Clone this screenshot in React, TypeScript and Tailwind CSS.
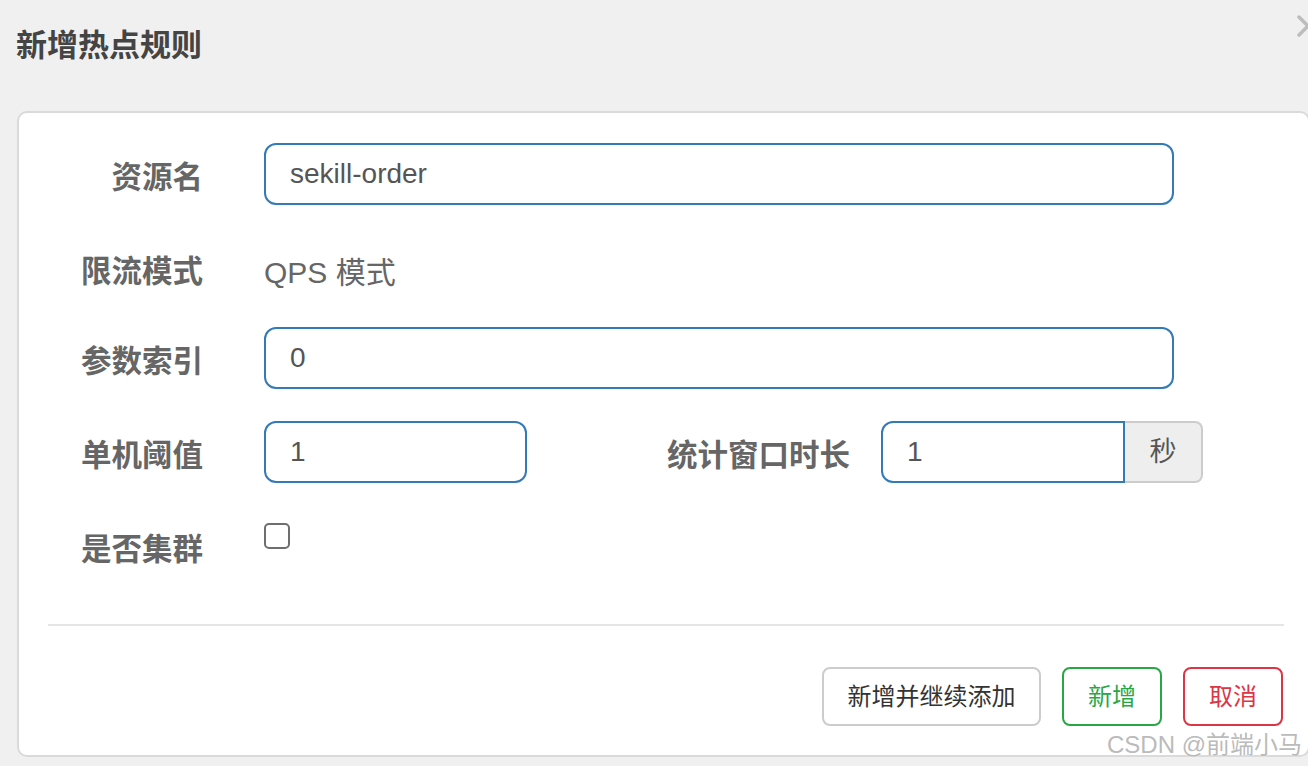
import React from 'react';

const font = { fontFamily: '"Liberation Sans", "Noto Sans CJK SC", sans-serif' };

const Label: React.FC<{ children: React.ReactNode; className?: string }> = ({ children, className = 'w-[155px]' }) => (
  <div className={`${className} h-[62px] flex items-center justify-end pt-2 text-[30.5px] font-bold text-[#666] shrink-0`}>
    {children}
  </div>
);

const TextInput: React.FC<{ value: string; className?: string }> = ({ value, className = 'w-[910px] rounded-[12px]' }) => (
  <div className={`${className} h-[62px] border-2 border-[#337ab7] bg-white flex items-center pl-6 text-[28px] text-[#555]`}>
    {value}
  </div>
);

export default function App() {
  return (
    <div className="relative w-[1308px] h-[766px] overflow-hidden bg-[#f0f0f0]" style={font}>
      <div className="pt-[27px] pl-4 text-[31px] leading-[37px] font-bold text-[#444]">新增热点规则</div>

      <svg className="absolute left-[1297px] top-[15px]" width="22" height="22" viewBox="0 0 22 22">
        <path d="M2 2 L20 20 M20 2 L2 20" stroke="#bdbdbd" strokeWidth="3.5" strokeLinecap="round" />
      </svg>

      <div className="mt-[47px] ml-[17px] w-[1293px] h-[646px] border-2 border-[#dadada] rounded-[10px] bg-white pt-[30px] pl-[29px] pr-[24px]">
        <div className="flex flex-col gap-[32px]">
          <div className="flex">
            <Label>资源名</Label>
            <div className="ml-[61px]">
              <TextInput value="sekill-order" />
            </div>
          </div>

          <div className="flex h-[58px] pt-[12px]">
            <div className="w-[155px] h-[46px] flex items-center justify-end text-[30.5px] font-bold text-[#666] shrink-0">限流模式</div>
            <div className="ml-[61px] h-[46px] flex items-center text-[30px] text-[#666]">QPS 模式</div>
          </div>

          <div className="flex">
            <Label>参数索引</Label>
            <div className="ml-[61px]">
              <TextInput value="0" />
            </div>
          </div>

          <div className="flex">
            <Label>单机阈值</Label>
            <div className="ml-[61px]">
              <TextInput value="1" className="w-[263px] rounded-[12px]" />
            </div>
            <Label className="w-[323px]">统计窗口时长</Label>
            <div className="ml-[31px] flex">
              <TextInput value="1" className="w-[244px] rounded-l-[12px]" />
              <div className="w-[78px] h-[62px] border-2 border-l-0 border-[#cccccc] bg-[#eeeeee] rounded-r-[8px] flex items-center justify-center text-[27px] text-[#555]">
                秒
              </div>
            </div>
          </div>

          <div className="flex h-[62px]">
            <Label>是否集群</Label>
            <div className="ml-[61px] pt-2">
              <div className="w-[26px] h-[26px] border-2 border-[#6e6e6e] rounded-[5px] bg-white" />
            </div>
          </div>
        </div>

        <div className="mt-[47px] h-[2px] bg-[#e5e5e5]" />

        <div className="mt-[41px] flex justify-end gap-[21px] pr-px">
          <button className="w-[219px] h-[59px] border-2 border-[#cccccc] rounded-[8px] bg-white text-[24px] text-[#333]">新增并继续添加</button>
          <button className="w-[100px] h-[59px] border-2 border-[#28a745] rounded-[8px] bg-white text-[24px] text-[#28a745]">新增</button>
          <button className="w-[100px] h-[59px] border-2 border-[#dc3545] rounded-[8px] bg-white text-[24px] text-[#dc3545]">取消</button>
        </div>
      </div>

      <div className="absolute left-[1107px] top-[729px] text-[24px] leading-[32px] text-[#a8a8a8]/80 [text-shadow:0_0_2px_white]">
        CSDN @前端小马
      </div>
    </div>
  );
}
